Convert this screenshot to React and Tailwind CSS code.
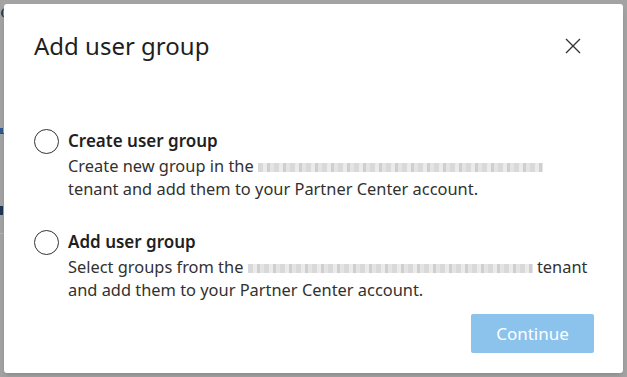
import React from 'react';

const font = { fontFamily: '"Noto Sans", "Open Sans", sans-serif' };

const Blurred = ({ width }) => (
    <span
        className="inline-block h-[9px] align-middle bg-[repeating-linear-gradient(90deg,#d9d9d9_0_5px,#ebebeb_5px_9px,#cfcfcf_9px_12px,#e4e4e4_12px_16px)]"
        style={{ width }}
    />
);

const Option = ({ title, children }) => (
    <label className="flex items-start gap-[9px] cursor-pointer">
        <span className="mt-[1px] w-[25px] h-[25px] shrink-0 rounded-full border border-[#333] bg-white" />
        <span className="flex flex-col">
            <span className="text-[17px] leading-[26px] font-semibold text-[#1f1f1f]">{title}</span>
            <span className="text-[16.4px] leading-[23px] text-[#323130]">{children}</span>
        </span>
    </label>
);

export default function App() {
    return (
        <div className="relative w-[627px] h-[377px] bg-[#a3a3a3] p-[4px] overflow-hidden" style={font}>
            {/* bits of the page behind the overlay */}
            <span className="absolute left-[1px] top-[8px] w-[6px] h-[10px] rounded-l-full border-l-2 border-[#2b3d55]" />
            <span className="absolute left-0 top-[128px] w-[3px] h-[6px] bg-[#2f5a8a]" />
            <span className="absolute left-0 top-[133px] w-[4px] h-[1px] bg-[#5a4a2a]" />
            <span className="absolute left-0 top-[206px] w-[3px] h-[9px] bg-[#1f3552]" />
            <span className="absolute left-0 top-[233px] w-[4px] h-[1px] bg-[#b3b3b3]" />

            <div className="relative w-[619px] h-[369px] bg-white rounded-[3px] shadow-md flex flex-col px-[30px]">
                <div className="flex items-center justify-between pt-[26px]">
                    <h1 className="text-[24px] leading-[32px] text-[#1f1f1f]">Add user group</h1>
                    <button className="mr-[8px] w-[24px] h-[24px] flex items-center justify-center text-[#323130]">
                        <svg width="16" height="16" viewBox="0 0 16 16" fill="none" stroke="currentColor" strokeWidth="1.3">
                            <path d="M1 1L15 15M15 1L1 15" />
                        </svg>
                    </button>
                </div>

                <div className="flex flex-col gap-[29px] mt-[66px]">
                    <Option title="Create user group">
                        Create new group in the <Blurred width="285px" />
                        <br />
                        tenant and add them to your Partner Center account.
                    </Option>
                    <Option title="Add user group">
                        Select groups from the <Blurred width="285px" /> tenant
                        <br />
                        and add them to your Partner Center account.
                    </Option>
                </div>

                <div className="flex justify-end mt-auto mb-[20px] mr-[-1px]">
                    <button className="w-[123px] h-[39px] rounded-[2px] bg-[#8cc3ec] text-white text-[17px]">
                        Continue
                    </button>
                </div>
            </div>
        </div>
    );
}
